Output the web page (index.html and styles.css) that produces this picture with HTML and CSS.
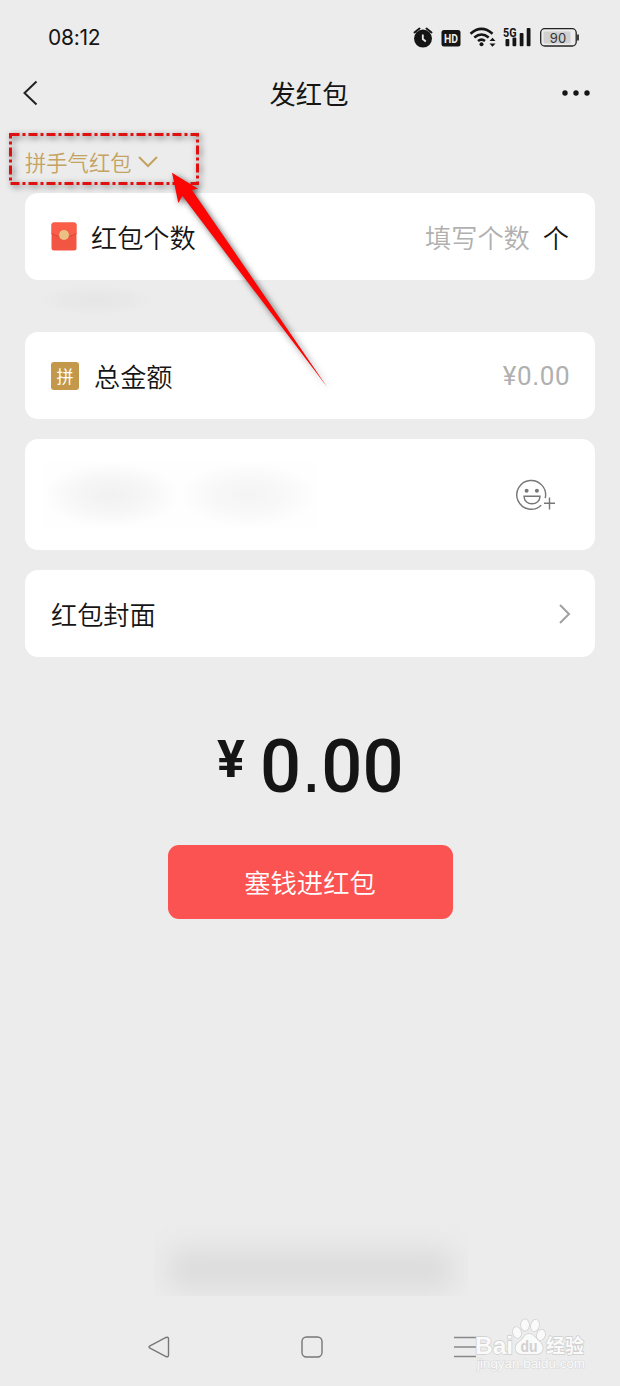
FILE: index.html
```html
<!DOCTYPE html>
<html lang="zh-CN">
<head>
<meta charset="utf-8">
<title>发红包</title>
<link rel="stylesheet" href="styles.css">
</head>
<body>
<main class="screen">
  <div class="status">
    <span class="time">08:12</span>
    <svg class="status-icons" width="170" height="24" viewBox="410 26 170 24">
      <g fill="#151515" stroke="none">
        <circle cx="423" cy="38.600" r="9"/>
        <path d="M414.500 32.500l5-4M431.500 32.500l-5-4" stroke="#151515" stroke-width="2" stroke-linecap="round"/>
        <path d="M422.800 34.500v4.500l3 2.500" stroke="#ececec" stroke-width="1.800" fill="none"/>
        <rect x="441.500" y="30" width="19" height="16.500" rx="2.500"/>
        <circle cx="481.500" cy="44.300" r="2"/>
        <path d="M490 37.500l3 3.300h-6zM490 46.500l3-3.300h-6z" transform="translate(2.500 .2)"/>
        <rect x="505.500" y="39" width="3.800" height="7.200" rx="1"/>
        <rect x="512.500" y="37.500" width="3.800" height="8.700" rx="1"/>
        <rect x="519.700" y="33" width="3.800" height="13.200" rx="1"/>
        <rect x="526.700" y="28" width="3.800" height="18.200" rx="1"/>
      </g>
      <g fill="none" stroke="#151515" stroke-width="2.600">
        <path d="M470.500 33.700q11-9.500 22 0M474.300 37.500q7.200-6 14.400 0M478 41q3.500-2.800 7 0"/>
      </g>
      <text class="hd" x="444" y="43" textLength="14" lengthAdjust="spacingAndGlyphs">HD</text>
      <text class="five-g" x="503" y="36.500" textLength="13.500" lengthAdjust="spacingAndGlyphs">5G</text>
      <rect x="543.500" y="31.500" width="27" height="12" rx="1" fill="#d0d0d0"/>
      <rect x="540.700" y="28.700" width="35.500" height="17.300" rx="4" fill="none" stroke="#222" stroke-width="1.300"/>
      <path d="M578 34.500v6" stroke="#222" stroke-width="1.700"/>
      <text class="battery" x="558" y="42.500" text-anchor="middle">90</text>
    </svg>
  </div>
  <header class="header">
    <svg width="16" height="28" viewBox="0 0 16 28"><path d="M13.500 2.500L1.500 14l12 11.500" fill="none" stroke="#222" stroke-width="2"/></svg>
    <h1 class="title">发红包</h1>
    <svg width="30" height="8" viewBox="0 0 30 8" fill="#151515"><circle cx="4" cy="4" r="2.700"/><circle cx="15" cy="4" r="2.700"/><circle cx="26" cy="4" r="2.700"/></svg>
  </header>
  <div class="kind">
    <span class="kind-name">拼手气红包</span>
    <svg width="20" height="12" viewBox="0 0 20 12"><path d="M1 1l9 9 9-9" fill="none" stroke="#c4a25f" stroke-width="2"/></svg>
  </div>
  <section class="card">
    <svg class="packet" width="26" height="29" viewBox="0 0 26 29"><rect x=".5" y=".5" width="25" height="28" rx="2.500" fill="#f35543"/><path d="M.5 3A2.500 2.500 0 0 1 3 .5h20A2.500 2.500 0 0 1 25.500 3v8.500q-12.500 7-25 0z" fill="#fa5e4b"/><path d="M.5 11.500q12.500 7 25 0" fill="none" stroke="#d94a3b"/><circle cx="13" cy="13" r="5" fill="#e9c283"/></svg>
    <span class="label">红包个数</span>
    <span class="hint count">填写个数</span>
    <span class="label unit">个</span>
  </section>
  <div class="smudge-row"><i class="smudge small"></i></div>
  <section class="card">
    <span class="badge">拼</span>
    <span class="label">总金额</span>
    <span class="hint money">¥0<span class="dot">.</span>00</span>
  </section>
  <section class="card message">
    <div class="smudges"><i class="smudge left"></i><i class="smudge right"></i></div>
    <svg class="emoji" width="40" height="33" viewBox="0 0 40 33" fill="none" stroke="#777" stroke-width="1.400">
      <path d="M29.200 19.200A14.400 14.400 0 1 0 25.200 26.200"/>
      <circle cx="10.600" cy="11.700" r="2" fill="#777" stroke="none"/><circle cx="20.900" cy="11.700" r="2" fill="#777" stroke="none"/>
      <path d="M8 17.200h16c0 4.500-3.500 7.600-8 7.600s-8-3.100-8-7.600z"/>
      <path d="M28 24.300h11M33.500 18.500v12"/>
    </svg>
  </section>
  <section class="card cover">
    <span class="label">红包封面</span>
    <svg class="next" width="12" height="20" viewBox="0 0 12 20"><path d="M1 1l9 9-9 9" fill="none" stroke="#a0a0a0" stroke-width="2"/></svg>
  </section>
  <div class="total"><span class="yen">¥</span><span class="sum">0<span class="dot">.</span>00</span></div>
  <button class="send">塞钱进红包</button>
  <div class="footer-note"><i class="smudge wide"></i></div>
  <nav class="nav">
    <svg width="22" height="22" viewBox="0 0 22 22" fill="none" stroke="#777" stroke-width="1.400"><path d="M2 9.900L18 1.500q2.500-1 2.500 1.500v16q0 2.500-2.500 1.500L2 12.100q-2-1.100 0-2.200z"/></svg>
    <svg width="22" height="22" viewBox="0 0 22 22" fill="none" stroke="#777" stroke-width="1.400"><rect x="1" y="1" width="20" height="20" rx="4.500"/></svg>
    <svg width="22" height="22" viewBox="0 0 22 22" stroke="#888" stroke-width="1.700"><path d="M0 1.500h22M0 11h22M0 20.500h22"/></svg>
  </nav>
  <svg class="watermark" width="130" height="65" viewBox="470 1315 130 65">
    <g class="wm-shapes">
      <text class="wm-latin" x="475" y="1354" textLength="38" lengthAdjust="spacingAndGlyphs">Bai</text>
      <ellipse cx="517" cy="1332.500" rx="4" ry="5.500" transform="rotate(-15 517 1332.500)"/>
      <ellipse cx="525" cy="1325" rx="4" ry="5.800"/>
      <ellipse cx="535" cy="1325.500" rx="4" ry="5.800" transform="rotate(12 535 1325.500)"/>
      <ellipse cx="541" cy="1335" rx="4" ry="5.300" transform="rotate(20 541 1335)"/>
      <path d="M529 1334c5 0 7 5 11 8s4 12-3 12h-15c-8 0-8-9-3-12s5-8 10-8z"/>
      <text class="wm-cjk" x="546" y="1353" textLength="38" lengthAdjust="spacingAndGlyphs">经验</text>
    </g>
    <text class="wm-du" x="520.500" y="1352" textLength="17" lengthAdjust="spacingAndGlyphs">du</text>
    <text class="wm-url" x="477" y="1368" textLength="108" lengthAdjust="spacingAndGlyphs">jingyan.baidu.com</text>
  </svg>
  <svg class="pointer" width="350" height="400" viewBox="0 0 350 400">
    <rect class="marker" x="10.500" y="134.500" width="187" height="49"/>
    <path class="arrow" d="M172 172.700L178.300 203l4.200-7L327.500 387.500 192 190l6-1.300z"/>
  </svg>
</main>
</body>
</html>
```
FILE: styles.css
```css
* { box-sizing: border-box; }
body {
  margin: 0;
  background: #ececec;
  color: #151515;
  font-family: "Noto Sans CJK SC", sans-serif;
}
svg { display: block; flex: none; }
.screen { position: relative; width: 620px; height: 1386px; overflow: hidden; }
.status {
  height: 58px;
  padding: 26px 40px 0 48px;
  display: flex;
  justify-content: space-between;
}
.time { font: 21px/24px Inter, sans-serif; letter-spacing: -.3px; }
.hd { font: bold 13px Roboto, sans-serif; fill: #ececec; }
.five-g { font: bold 12px Roboto, sans-serif; fill: #151515; }
.battery { font: 13px Inter, sans-serif; fill: #333; }
.header {
  height: 70px;
  padding: 0 29px 0 23px;
  display: flex;
  align-items: center;
  justify-content: space-between;
}
.title { margin: 0 0 0 18px; font-size: 26.300px; line-height: 40px; font-weight: 400; }
.kind {
  height: 65px;
  padding: 3px 0 0 25px;
  display: flex;
  align-items: center;
  gap: 6px;
  color: #c4a25f;
}
.kind-name { font-size: 21.300px; line-height: 32px; font-weight: 350; }
.card {
  height: 87px;
  margin: 0 25px;
  padding: 0 26px;
  display: flex;
  align-items: center;
  border-radius: 13px;
  background: #fff;
}
.label { font-size: 26.200px; line-height: 40px; font-weight: 350; }
.packet { margin-right: 14px; }
.hint { margin-left: auto; color: #b0b0b0; font-size: 26.200px; line-height: 40px; font-weight: 350; }
.unit { margin-left: 13px; }
.money { margin-right: -1px; font-family: Roboto, sans-serif; font-size: 26px; letter-spacing: .5px; font-weight: 400; }
.dot { font-family: "Liberation Sans", sans-serif; }
.badge {
  width: 28px;
  height: 28px;
  margin-right: 15px;
  border-radius: 3px;
  background: #c4984a;
  color: #fff;
  font-size: 17px;
  line-height: 27px;
  text-align: center;
}
.smudge-row { height: 52px; padding: 5px 0 0 36px; }
.smudge { display: block; }
.small { width: 120px; height: 30px; background: radial-gradient(closest-side, #e6e6e6, #e8e8e8 50%, #ececec); }
.message { height: 111px; margin-top: 20px; padding: 0 39px 0 18px; justify-content: space-between; }
.emoji { margin-top: 1px; }
.smudges { display: flex; }
.left { width: 136px; height: 66px; background: radial-gradient(closest-side, #f1f1f1, #f6f6f6 50%, #fefefe); }
.right { width: 138px; height: 66px; background: radial-gradient(closest-side, #f4f4f4, #f8f8f8 50%, #fefefe); }
.cover { margin-top: 20px; }
.next { margin-left: auto; margin-right: -2px; }
.total {
  height: 188px;
  padding: 67px 0 0 217px;
  display: flex;
  align-items: flex-start;
  font-family: Roboto, sans-serif;
  font-weight: 500;
}
.yen { width: 43px; font-size: 52px; line-height: 72px; font-weight: 700; }
.sum { font-size: 75px; line-height: 84px; transform: scaleX(.965); transform-origin: left; }
.send {
  display: block;
  width: 285px;
  height: 74px;
  margin: 0 0 0 167.500px;
  padding: 0;
  border: 0;
  border-radius: 11px;
  background: #fb5352;
  color: #fff;
  font: 350 26.300px/74px "Noto Sans CJK SC", sans-serif;
}
.footer-note { height: 417px; padding: 306px 0 0 154px; }
.wide {
  width: 314px;
  height: 71px;
  background: #dcdcdc;
  box-shadow: inset 0 9px 28px 15px #ececec;
}
.nav { display: flex; justify-content: space-between; padding: 0 144px 0 148px; }
.watermark { position: absolute; left: 470px; top: 1315px; }
.wm-shapes { fill: #fafafa; stroke: #cfcfcf; stroke-width: 1.400px; paint-order: stroke; }
.wm-latin { font: bold 24px "Liberation Sans", sans-serif; }
.wm-cjk { font: bold 19px "Noto Sans CJK SC", sans-serif; }
.wm-du { font: bold 16px "Liberation Sans", sans-serif; fill: #d0d0d0; }
.wm-url { font: 12.500px "Liberation Sans", sans-serif; fill: #fafafa; stroke: #dadada; stroke-width: 1.200px; paint-order: stroke; }
.pointer { position: absolute; left: 0; top: 0; filter: drop-shadow(2px 2px 3px rgba(0, 0, 0, .6)); }
.marker { fill: none; stroke: #df1010; stroke-width: 3; stroke-dasharray: 9 3 3 3; }
.arrow { fill: #fb0505; }
```
